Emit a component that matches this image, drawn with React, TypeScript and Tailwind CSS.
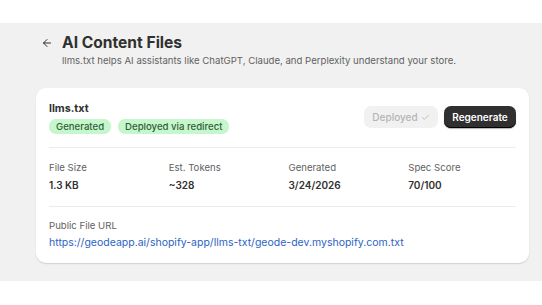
import { ArrowLeft, Check } from 'lucide-react';

const stats = [
  { label: 'File Size', value: '1.3 KB' },
  { label: 'Est. Tokens', value: '~328' },
  { label: 'Generated', value: '3/24/2026' },
  { label: 'Spec Score', value: '70/100' },
];

export default function App() {
  return (
    <div className="w-[542px] h-[305px] bg-white pt-[23px] text-[#303030]" style={{ fontFamily: 'Inter, "Noto Sans", sans-serif' }}>
      <div className="h-[258px] bg-[#f1f1f1] pt-[9px] px-[36px]">
        <header className="flex items-start gap-[10px] pl-[5px]">
          <ArrowLeft className="mt-[5px] h-[12px] w-[12px] text-[#303030]" strokeWidth={2} />
          <div className="-ml-[1px]">
            <h1 className="text-[15.6px] font-bold leading-[22px]">AI Content Files</h1>
            <p className="text-[9.6px] leading-[14px] text-[#616161]">
              llms.txt helps AI assistants like ChatGPT, Claude, and Perplexity understand your store.
            </p>
          </div>
        </header>

        <section className="mt-[20px] w-[493px] rounded-[10px] bg-white px-[13px] pt-[13px] pb-[13px] shadow-[0_1px_0_0_rgba(26,26,26,0.07),0_1px_2px_rgba(0,0,0,0.08)]">
          <div className="flex items-start justify-between">
            <div>
              <h2 className="text-[10.8px] font-bold leading-[15px]">llms.txt</h2>
              <div className="mt-[3px] flex gap-[7px]">
                <span className="rounded-[7px] bg-[#c6f6cb] px-[7px] text-[9.6px] font-medium leading-[15px] text-[#2f5e39]">Generated</span>
                <span className="rounded-[7px] bg-[#c6f6cb] px-[7px] text-[9.6px] font-medium leading-[15px] text-[#2f5e39]">Deployed via redirect</span>
              </div>
            </div>
            <div className="mt-[5px] flex gap-[6px]">
              <button className="flex h-[22px] w-[74px] items-center justify-center gap-[3px] rounded-[7px] bg-[#f1f1f1] text-[10px] font-medium text-[#b5b5b5]">
                Deployed <Check className="h-[9px] w-[9px]" strokeWidth={2.2} />
              </button>
              <button className="h-[22px] w-[72px] rounded-[7px] bg-[#303030] text-[10px] font-semibold text-white shadow-[inset_0_-1px_0_#000,0_1px_1px_rgba(0,0,0,0.3)]">
                Regenerate
              </button>
            </div>
          </div>

          <div className="mt-[13px] border-t border-[#ebebeb]" />

          <div className="grid grid-cols-4 gap-[12px] pt-[13px] pb-[14px]">
            {stats.map((s) => (
              <div key={s.label}>
                <p className="text-[9.6px] leading-[14px] text-[#616161]">{s.label}</p>
                <p className="mt-[3px] text-[10px] font-semibold leading-[14px]">{s.value}</p>
              </div>
            ))}
          </div>

          <div className="border-t border-[#ebebeb]" />

          <div className="pt-[12px]">
            <p className="text-[9.6px] leading-[14px] text-[#616161]">Public File URL</p>
            <a className="mt-[3px] block text-[10.5px] leading-[14px] text-[#2c63c4]" href="#">
              https://geodeapp.ai/shopify-app/llms-txt/geode-dev.myshopify.com.txt
            </a>
          </div>
        </section>
      </div>
    </div>
  );
}
